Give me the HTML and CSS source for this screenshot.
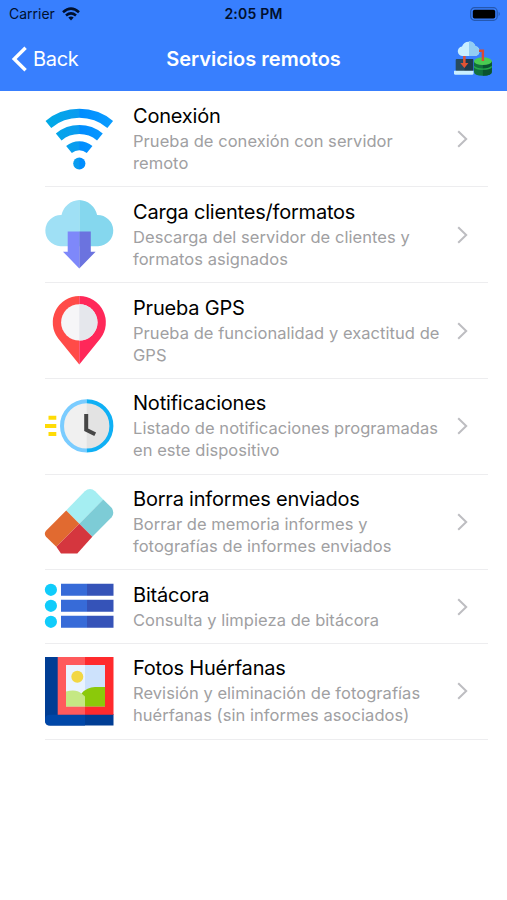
FILE: index.html
```html
<!DOCTYPE html>
<html lang="es">
<head>
    <meta charset="UTF-8">
    <meta name="viewport" content="width=device-width, initial-scale=1.0">
    <title>Servicios remotos</title>
    <link rel="stylesheet" href="styles.css">
</head>
<body>
    <header>
        <div class="status-bar">
            <div class="carrier">
                <span>Carrier</span>
                <svg width="18" height="14" viewBox="0 0 18 14" fill="none" stroke="#00102e" stroke-width="2.6">
                    <path d="M1 5.2Q9 -1.9 17 5.2"/>
                    <path d="M4 8.4Q9 4.2 14 8.4"/>
                    <path d="M6.3 10.4Q9 8.4 11.7 10.4L9 13.5Z" fill="#00102e" stroke="none"/>
                </svg>
            </div>
            <span class="time">2:05 PM</span>
            <svg class="battery" width="31" height="14" viewBox="0 0 31 14">
                <rect x="0.7" y="0.7" width="26.5" height="12.6" rx="3.8" fill="none" stroke="#2558b0" stroke-width="1.2"/>
                <rect x="2.8" y="2.7" width="22.4" height="8.8" rx="1.8" fill="#000"/>
                <path d="M28.7 4.8Q30.8 7 28.7 9.2Z" fill="#2558b0"/>
            </svg>
        </div>
        <nav>
            <a class="back">
                <svg width="16" height="26" viewBox="0 0 16 26" fill="none" stroke="#fff" stroke-width="3.4">
                    <path d="M14.6 1.7L3.2 13L14.6 24.3"/>
                </svg>
                <span>Back</span>
            </a>
            <h1>Servicios remotos</h1>
            <svg class="sync" width="38" height="35" viewBox="0 0 38 35">
                <rect x="1.7" y="18" width="17.5" height="12" rx="1" fill="#274b5e"/>
                <rect x="10.5" y="18" width="8.7" height="12" fill="#1c3b4c"/>
                <path d="M0 29.7H19.5V32.5Q19.5 33.7 18 33.7H1.5Q0 33.7 0 32.5Z" fill="#c9efff"/>
                <path d="M20 20V31Q20 34.7 28.9 34.7T37.8 31V20Z" fill="#12703d"/>
                <path d="M28.9 20H37.8V31Q37.8 34.7 28.9 34.7Z" fill="#0a5330"/>
                <path d="M20 25.5Q22 28.2 28.9 28.2T37.8 25.5" fill="none" stroke="#25a94a" stroke-width="1.3"/>
                <ellipse cx="28.9" cy="20.2" rx="8.9" ry="3.9" fill="#4acb52"/>
                <path d="M9 15A4.6 4.6 0 0 1 8 5.6A7.3 7.3 0 0 1 21.5 5.2A5 5 0 0 1 21.5 15Z" fill="#c9efff"/>
                <path d="M15 0A7.3 7.3 0 0 1 21.5 5.2A5 5 0 0 1 21.5 15H15Z" fill="#92cdf3"/>
                <path d="M25 9.7H28.9V20" fill="none" stroke="#d84a35" stroke-width="2.4"/>
                <path d="M9.1 15H11.6V22H14.4L10.4 27L6.3 22H9.1Z" fill="#e25334"/>
            </svg>
        </nav>
    </header>

    <ul class="services">
        <li>
            <svg class="icon" viewBox="0 0 69 69">
                <defs>
                    <linearGradient id="wave" gradientUnits="userSpaceOnUse" x1="0" y1="0" x2="69" y2="0">
                        <stop offset="0" stop-color="#00abe5"/>
                        <stop offset="0.49" stop-color="#0a9bf0"/>
                        <stop offset="0.51" stop-color="#008cff"/>
                        <stop offset="1" stop-color="#0a9dff"/>
                    </linearGradient>
                </defs>
                <g fill="none" stroke="url(#wave)" stroke-width="9">
                    <path d="M3.4 19.4A48.7 48.7 0 0 1 65.2 19.4"/>
                    <path d="M13.7 32A32.4 32.4 0 0 1 54.9 32"/>
                    <path d="M24 44.4A16.3 16.3 0 0 1 44.6 44.4"/>
                </g>
                <circle cx="34.3" cy="58.5" r="6.1" fill="url(#wave)"/>
            </svg>
            <div class="text">
                <h2>Conexión</h2>
                <p>Prueba de conexión con servidor<br>remoto</p>
            </div>
            <svg class="chevron" viewBox="0 0 11 18"><path d="M1.2 1.2L9.2 9L1.2 16.8"/></svg>
        </li>
        <li>
            <svg class="icon" viewBox="0 0 69 69">
                <path d="M34.3 0A19 19 0 0 0 16.5 15A15.6 15.6 0 0 0 15.5 46.3H34.3Z" fill="#9fe0f5"/>
                <path d="M34.3 0A19 19 0 0 1 52.1 15A15.6 15.6 0 0 1 53.1 46.3H34.3Z" fill="#85d7ee"/>
                <path d="M22.7 31.4H34.3V68.5L18 51.7H22.7Z" fill="#7e88fa"/>
                <path d="M45.8 31.4H34.3V68.5L50.6 51.7H45.8Z" fill="#6b73df"/>
            </svg>
            <div class="text">
                <h2>Carga clientes/formatos</h2>
                <p>Descarga del servidor de clientes y<br>formatos asignados</p>
            </div>
            <svg class="chevron" viewBox="0 0 11 18"><path d="M1.2 1.2L9.2 9L1.2 16.8"/></svg>
        </li>
        <li>
            <svg class="icon" viewBox="0 0 69 69">
                <path d="M34.3 0A26.5 26.5 0 0 0 13.2 42.6L34.3 68.5Z" fill="#ff4b48"/>
                <path d="M34.3 0A26.5 26.5 0 0 1 55.4 42.6L34.3 68.5Z" fill="#ff2859"/>
                <circle cx="34.3" cy="26.4" r="18.2" fill="#f6f6f8"/>
                <path d="M34.3 8.2A18.2 18.2 0 0 1 34.3 44.6Z" fill="#e5e7ec"/>
            </svg>
            <div class="text">
                <h2>Prueba GPS</h2>
                <p>Prueba de funcionalidad y exactitud de<br>GPS</p>
            </div>
            <svg class="chevron" viewBox="0 0 11 18"><path d="M1.2 1.2L9.2 9L1.2 16.8"/></svg>
        </li>
        <li>
            <svg class="icon" viewBox="0 0 69 69">
                <path d="M3.5 25.8H11.3M0 33.9H11.3M3.5 42H11.3" stroke="#ffdb05" stroke-width="4"/>
                <circle cx="41.7" cy="33.9" r="24.7" fill="#f0f0f0"/>
                <path d="M41.7 9.2A24.7 24.7 0 0 1 41.7 58.6Z" fill="#e3e3e3"/>
                <path d="M41.7 9.2A24.7 24.7 0 0 0 41.7 58.6" fill="none" stroke="#7accff" stroke-width="4"/>
                <path d="M41.7 9.2A24.7 24.7 0 0 1 41.7 58.6" fill="none" stroke="#0fb0f5" stroke-width="4"/>
                <path d="M41.2 22V37.8L50.2 42.2" fill="none" stroke="#464646" stroke-width="4"/>
            </svg>
            <div class="text">
                <h2>Notificaciones</h2>
                <p>Listado de notificaciones programadas<br>en este dispositivo</p>
            </div>
            <svg class="chevron" viewBox="0 0 11 18"><path d="M1.2 1.2L9.2 9L1.2 16.8"/></svg>
        </li>
        <li>
            <svg class="icon" viewBox="0 0 69 69">
                <path d="M21.2 23.4L39.8 4.2Q45 0 50.2 4.2L58.2 12.5L34.3 36.8Z" fill="#a5eef2"/>
                <path d="M58.2 12.5L66.6 20.8Q70 25.7 66.6 30.3L47.3 49.8L34.3 36.8Z" fill="#7dccd6"/>
                <path d="M21.2 23.4L34.3 36.8L11.3 59.8L1 49.8Q-1.4 46.8 1 43.8Z" fill="#e16a30"/>
                <path d="M34.3 36.8L47.3 49.8L32.3 66.5H16L11.3 59.8Z" fill="#d5363e"/>
            </svg>
            <div class="text">
                <h2>Borra informes enviados</h2>
                <p>Borrar de memoria informes y<br>fotografías de informes enviados</p>
            </div>
            <svg class="chevron" viewBox="0 0 11 18"><path d="M1.2 1.2L9.2 9L1.2 16.8"/></svg>
        </li>
        <li class="short">
            <svg class="icon" viewBox="0 0 69 69">
                <g fill="#10ccfb">
                    <circle cx="5.9" cy="17.8" r="6.1"/>
                    <circle cx="5.9" cy="33.8" r="6.1"/>
                    <circle cx="5.9" cy="49.8" r="6.1"/>
                </g>
                <path d="M16 11.8H42V23.8H16ZM16 27.8H42V39.8H16ZM16 43.8H42V55.8H16Z" fill="#376bd8"/>
                <path d="M42 11.8H68.5V23.8H42ZM42 27.8H68.5V39.8H42ZM42 43.8H68.5V55.8H42Z" fill="#3553b8"/>
            </svg>
            <div class="text">
                <h2>Bitácora</h2>
                <p>Consulta y limpieza de bitácora</p>
            </div>
            <svg class="chevron" viewBox="0 0 11 18"><path d="M1.2 1.2L9.2 9L1.2 16.8"/></svg>
        </li>
        <li>
            <svg class="icon" viewBox="0 0 69 69">
                <path d="M0 0H14V57H68.5V68.5H5Q0 68.5 0 63.5Z" fill="#003d94"/>
                <path d="M0 63Q0 57.7 5 57.7H40V68.5H5Q0 68.5 0 63Z" fill="#0047a8"/>
                <path d="M12.7 0H40V57.7H12.7Z" fill="#ff5a5c"/>
                <path d="M40 0H68.5V57.7H40Z" fill="#ff2a2d"/>
                <path d="M21 8H40V49.4H21Z" fill="#e9f3ff"/>
                <path d="M40 8H60V49.4H40Z" fill="#cde2fc"/>
                <circle cx="32.3" cy="19.8" r="6" fill="#f2d743"/>
                <path d="M21 34.5Q31 31.5 36.5 36.5L40 39V49.4H21Z" fill="#c5e884"/>
                <path d="M36.5 36.5Q42 30 50 30H60V49.4H40V39.5Z" fill="#8bc90a"/>
            </svg>
            <div class="text">
                <h2>Fotos Huérfanas</h2>
                <p>Revisión y eliminación de fotografías<br>huérfanas (sin informes asociados)</p>
            </div>
            <svg class="chevron" viewBox="0 0 11 18"><path d="M1.2 1.2L9.2 9L1.2 16.8"/></svg>
        </li>
    </ul>
</body>
</html>
```

FILE: styles.css
```css
* {
    box-sizing: border-box;
}
body {
    margin: 0;
    background-color: #fff;
    color: #000;
    font-family: Inter, "Liberation Sans", sans-serif;
}
header {
    height: 91px;
    background-color: #387ffe;
}
.status-bar {
    display: grid;
    grid-template-columns: 1fr auto 1fr;
    align-items: center;
    height: 27px;
    padding: 0 6px;
    color: #00102e;
    font-size: 14px;
}
.carrier {
    display: flex;
    align-items: center;
    gap: 7px;
    padding-left: 3px;
}
.time {
    font-size: 14px;
    font-weight: 600;
    letter-spacing: 0.2px;
}
.battery {
    justify-self: end;
}
nav {
    display: grid;
    grid-template-columns: 1fr auto 1fr;
    align-items: center;
    height: 63px;
    padding: 0 15px 0 11px;
    color: #fff;
}
.back {
    display: flex;
    align-items: center;
    gap: 6px;
    font-size: 20px;
    letter-spacing: -0.3px;
}
h1 {
    margin: 0 -2px 0 2px;
    font-size: 20px;
    font-weight: 600;
}
.sync {
    justify-self: end;
}
.services {
    margin: 0 19px 0 45px;
    padding: 0.8px 0 0;
    list-style: none;
}
li {
    display: flex;
    align-items: center;
    height: 95.7px;
    border-bottom: 1.5px solid #ededef;
}
li.short {
    height: 73.6px;
}
.icon {
    flex: none;
    width: 69px;
    height: 69px;
    overflow: visible;
}
.text {
    flex: 1;
    margin-left: 19px;
    padding-bottom: 1.6px;
    white-space: nowrap;
}
h2 {
    margin: 0;
    font-size: 20px;
    font-weight: 400;
    line-height: 28px;
    letter-spacing: -0.2px;
}
p {
    margin: 0;
    color: #a0a0a2;
    font-size: 16.5px;
    line-height: 22px;
    letter-spacing: 0.05px;
}
.chevron {
    flex: none;
    width: 11px;
    height: 18px;
    margin-right: 20px;
    fill: none;
    stroke: #bdbdc1;
    stroke-width: 2;
}
```
